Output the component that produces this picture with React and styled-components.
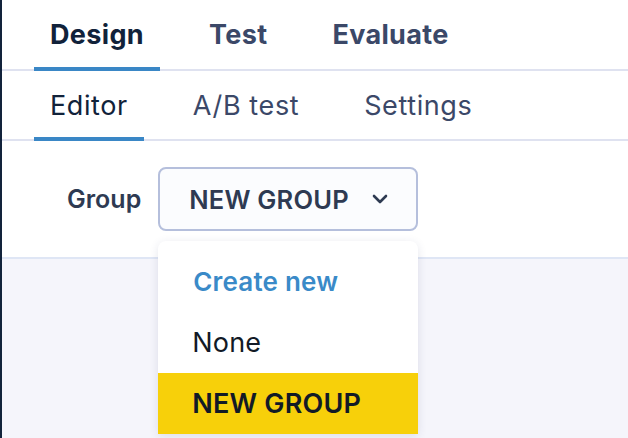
import React from 'react';
import styled, { createGlobalStyle } from 'styled-components';

const Global = createGlobalStyle`
  html, body {
    margin: 0;
    padding: 0;
    background: #f5f5fb;
    font-family: Inter, "Noto Sans", sans-serif;
  }
  *, *::before, *::after {
    box-sizing: border-box;
  }
`;

const Page = styled.div`
  width: 628px;
  height: 438px;
  overflow: hidden;
  border-left: 2px solid #12233b;
  background: #f5f5fb;
`;

const Header = styled.div`
  background: #ffffff;
  border-bottom: 2px solid #dfe6f5;
`;

const TabBar = styled.div`
  display: flex;
  gap: 33px;
  padding-left: 32px;
  height: ${p => p.$height}px;
  border-bottom: 2px solid #dfe2f0;
`;

const Tab = styled.div`
  position: relative;
  display: flex;
  align-items: center;
  padding: 0 16px;
  font-size: 27px;
  font-weight: ${p => (p.$bold ? 700 : 400)};
  color: ${p => (p.$active ? '#11223a' : '#3b4868')};
  letter-spacing: ${p => (p.$bold ? '0.35px' : '0.6px')};

  &::after {
    content: '';
    display: ${p => (p.$active ? 'block' : 'none')};
    position: absolute;
    left: 0;
    right: 0;
    bottom: -2px;
    height: 4px;
    background: #3a87c6;
  }
`;

const FormRow = styled.div`
  display: flex;
  align-items: center;
  gap: 17px;
  padding: 26px 0 26px 65px;
`;

const Label = styled.span`
  font-size: 25px;
  font-weight: 600;
  color: #2e3a52;
`;

const SelectWrap = styled.div`
  position: relative;
`;

const SelectBox = styled.div`
  display: flex;
  align-items: center;
  justify-content: space-between;
  width: 260px;
  height: 64px;
  padding: 0 28px 0 29px;
  border: 2px solid #b5bfdc;
  border-radius: 8px;
  background: #fbfcfe;
  font-size: 25.5px;
  font-weight: 600;
  color: #2e3a52;
  letter-spacing: 0.2px;
`;

const Menu = styled.div`
  position: absolute;
  top: 74px;
  left: 0;
  width: 260px;
  padding-top: 10px;
  background: #ffffff;
  border-radius: 8px 8px 0 0;
  box-shadow: 0 2px 10px rgba(40, 50, 110, 0.12);
  z-index: 2;
`;

const Item = styled.div`
  display: flex;
  align-items: center;
  height: 61px;
  padding-left: ${p => (p.$accent ? 35 : 34)}px;
  font-size: ${p => (p.$accent ? 26 : 27)}px;
  font-weight: ${p => (p.$accent || p.$selected ? 600 : 400)};
  color: ${p => (p.$accent ? '#3a8ac8' : '#121a26')};
  background: ${p => (p.$selected ? '#f7d00a' : 'transparent')};
  letter-spacing: 0.2px;
`;

const Chevron = () => (
  <svg width="16" height="10" viewBox="0 0 16 10" fill="none">
    <path d="M2 2L8 8L14 2" stroke="#2e3a52" strokeWidth="2.6" strokeLinecap="round" strokeLinejoin="round" />
  </svg>
);

export default function App() {
  return (
    <Page>
      <Global />
      <Header>
        <TabBar $height={71}>
          <Tab $bold $active>Design</Tab>
          <Tab $bold>Test</Tab>
          <Tab $bold>Evaluate</Tab>
        </TabBar>
        <TabBar $height={70}>
          <Tab $active>Editor</Tab>
          <Tab>A/B test</Tab>
          <Tab>Settings</Tab>
        </TabBar>
        <FormRow>
          <Label>Group</Label>
          <SelectWrap>
            <SelectBox>
              NEW GROUP
              <Chevron />
            </SelectBox>
            <Menu>
              <Item $accent>Create new</Item>
              <Item>None</Item>
              <Item $selected>NEW GROUP</Item>
            </Menu>
          </SelectWrap>
        </FormRow>
      </Header>
    </Page>
  );
}
